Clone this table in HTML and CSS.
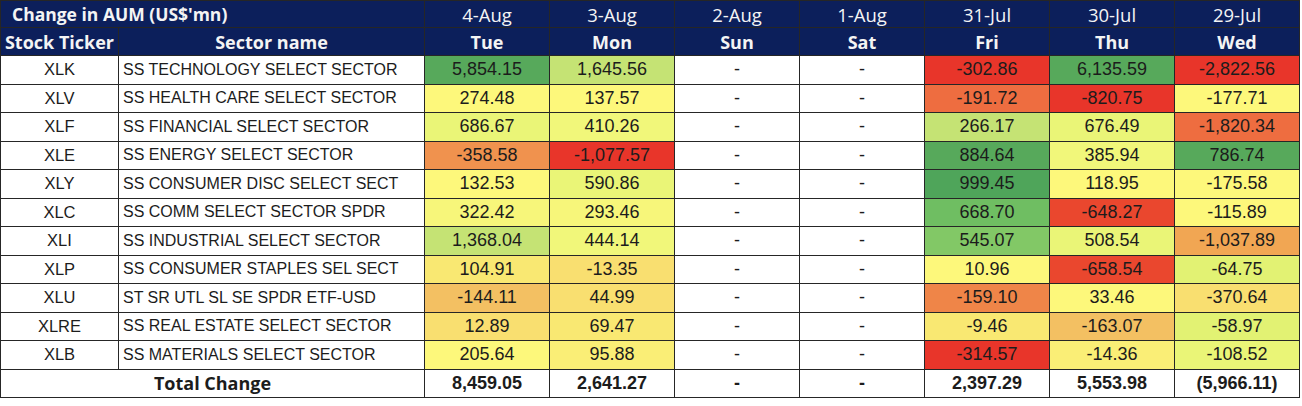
FILE: index.html
```html
<!DOCTYPE html>
<html>
<head>
<meta charset="utf-8">
<link rel="stylesheet" href="styles.css">
</head>
<body>
<table class="aum">
  <colgroup>
    <col class="c-tick"><col class="c-sect">
    <col class="c-day"><col class="c-day"><col class="c-day"><col class="c-day"><col class="c-day"><col class="c-day"><col class="c-day">
  </colgroup>
  <thead>
    <tr class="title-row">
      <th colspan="2" class="title">Change in AUM (US$'mn)</th>
      <th class="date">4-Aug</th><th class="date">3-Aug</th><th class="date">2-Aug</th><th class="date">1-Aug</th><th class="date">31-Jul</th><th class="date">30-Jul</th><th class="date">29-Jul</th>
    </tr>
    <tr class="head-row">
      <th>Stock Ticker</th><th>Sector name</th>
      <th>Tue</th><th>Mon</th><th>Sun</th><th>Sat</th><th>Fri</th><th>Thu</th><th>Wed</th>
    </tr>
  </thead>
  <tbody>
    <tr><td class="tick">XLK</td><td class="sect">SS TECHNOLOGY SELECT SECTOR</td>
      <td class="num g5">5,854.15</td><td class="num g3">1,645.56</td><td class="num">-</td><td class="num">-</td><td class="num r5">-302.86</td><td class="num g5">6,135.59</td><td class="num r5">-2,822.56</td></tr>
    <tr><td class="tick">XLV</td><td class="sect">SS HEALTH CARE SELECT SECTOR</td>
      <td class="num y0">274.48</td><td class="num y0">137.57</td><td class="num">-</td><td class="num">-</td><td class="num r4">-191.72</td><td class="num r5">-820.75</td><td class="num y0">-177.71</td></tr>
    <tr><td class="tick">XLF</td><td class="sect">SS FINANCIAL SELECT SECTOR</td>
      <td class="num g1">686.67</td><td class="num g1b">410.26</td><td class="num">-</td><td class="num">-</td><td class="num g3">266.17</td><td class="num g1">676.49</td><td class="num r4">-1,820.34</td></tr>
    <tr><td class="tick">XLE</td><td class="sect">SS ENERGY SELECT SECTOR</td>
      <td class="num r3">-358.58</td><td class="num r5">-1,077.57</td><td class="num">-</td><td class="num">-</td><td class="num g5">884.64</td><td class="num g1b">385.94</td><td class="num g5">786.74</td></tr>
    <tr><td class="tick">XLY</td><td class="sect">SS CONSUMER DISC SELECT SECT</td>
      <td class="num y0">132.53</td><td class="num g1">590.86</td><td class="num">-</td><td class="num">-</td><td class="num g6">999.45</td><td class="num y0">118.95</td><td class="num y0">-175.58</td></tr>
    <tr><td class="tick">XLC</td><td class="sect">SS COMM SELECT SECTOR SPDR</td>
      <td class="num g0">322.42</td><td class="num g0">293.46</td><td class="num">-</td><td class="num">-</td><td class="num g4">668.70</td><td class="num r5b">-648.27</td><td class="num y0">-115.89</td></tr>
    <tr><td class="tick">XLI</td><td class="sect">SS INDUSTRIAL SELECT SECTOR</td>
      <td class="num g3">1,368.04</td><td class="num g1b">444.14</td><td class="num">-</td><td class="num">-</td><td class="num g4b">545.07</td><td class="num g1">508.54</td><td class="num r2">-1,037.89</td></tr>
    <tr><td class="tick">XLP</td><td class="sect">SS CONSUMER STAPLES SEL SECT</td>
      <td class="num y1">104.91</td><td class="num y2">-13.35</td><td class="num">-</td><td class="num">-</td><td class="num y0">10.96</td><td class="num r5b">-658.54</td><td class="num g2">-64.75</td></tr>
    <tr><td class="tick">XLU</td><td class="sect">ST SR UTL SL SE SPDR ETF-USD</td>
      <td class="num r1">-144.11</td><td class="num y2">44.99</td><td class="num">-</td><td class="num">-</td><td class="num r3b">-159.10</td><td class="num y0">33.46</td><td class="num y2">-370.64</td></tr>
    <tr><td class="tick">XLRE</td><td class="sect">SS REAL ESTATE SELECT SECTOR</td>
      <td class="num y2">12.89</td><td class="num y1">69.47</td><td class="num">-</td><td class="num">-</td><td class="num y1">-9.46</td><td class="num r1">-163.07</td><td class="num g2">-58.97</td></tr>
    <tr><td class="tick">XLB</td><td class="sect">SS MATERIALS SELECT SECTOR</td>
      <td class="num y0">205.64</td><td class="num y1b">95.88</td><td class="num">-</td><td class="num">-</td><td class="num r5">-314.57</td><td class="num y1b">-14.36</td><td class="num g1">-108.52</td></tr>
  </tbody>
  <tfoot>
    <tr class="total-row">
      <td colspan="2" class="total-label">Total Change</td>
      <td class="num">8,459.05</td><td class="num">2,641.27</td><td class="num">-</td><td class="num">-</td><td class="num">2,397.29</td><td class="num">5,553.98</td><td class="num">(5,966.11)</td>
    </tr>
  </tfoot>
</table>
</body>
</html>
```

FILE: styles.css
```css
html, body {
  margin: 0;
  padding: 0;
  background: #ffffff;
}

.aum {
  border-collapse: collapse;
  table-layout: fixed;
  width: 1298px;
  font-family: "Liberation Sans", Arial, sans-serif;
  color: #1c1c1c;
}

.c-tick { width: 118px; }
.c-sect { width: 306px; }
.c-day { width: 125px; }

.aum th,
.aum td {
  border: 1px solid #262626;
  padding: 0;
  overflow: hidden;
  white-space: nowrap;
}

.aum thead th {
  background: #0c1f5b;
  color: #f4f4f4;
  font-family: "Open Sans", "Liberation Sans", sans-serif;
}

.title-row th {
  height: 26px;
  font-size: 18.5px;
  font-weight: 400;
  text-align: center;
  vertical-align: middle;
}

.title-row th.title {
  text-align: left;
  padding-left: 11px;
  font-weight: 700;
  font-size: 17.5px;
}

.head-row th {
  height: 27px;
  font-size: 18px;
  font-weight: 700;
  text-align: center;
}

.aum tbody td {
  height: 27.5px;
}

.tick {
  text-align: center;
  font-size: 16.5px;
}

.sect {
  text-align: left;
  padding-left: 4px !important;
  font-size: 16px;
}

.num {
  text-align: center;
  font-size: 18px;
}

.total-row td {
  height: 27px;
  font-weight: 700;
}

.total-label {
  text-align: center;
  font-family: "Open Sans", "Liberation Sans", sans-serif;
  font-size: 18px;
}

/* colour scale */
.g6 { background: #4fa55a; }
.g5 { background: #57a95b; }
.g4 { background: #6fbe62; }
.g4b { background: #82c866; }
.g3 { background: #c5e374; }
.g2 { background: #e2f273; }
.g1 { background: #eaf577; }
.g1b { background: #f1f77a; }
.g0 { background: #f7f67a; }
.y0 { background: #fdf87b; }
.y1b { background: #faee76; }
.y1 { background: #f9e872; }
.y2 { background: #f9df70; }
.r1 { background: #f3c062; }
.r2 { background: #f1a653; }
.r3 { background: #f0924e; }
.r3b { background: #ef8548; }
.r4 { background: #ee6d40; }
.r5b { background: #ea472e; }
.r5 { background: #e8352a; }
```
